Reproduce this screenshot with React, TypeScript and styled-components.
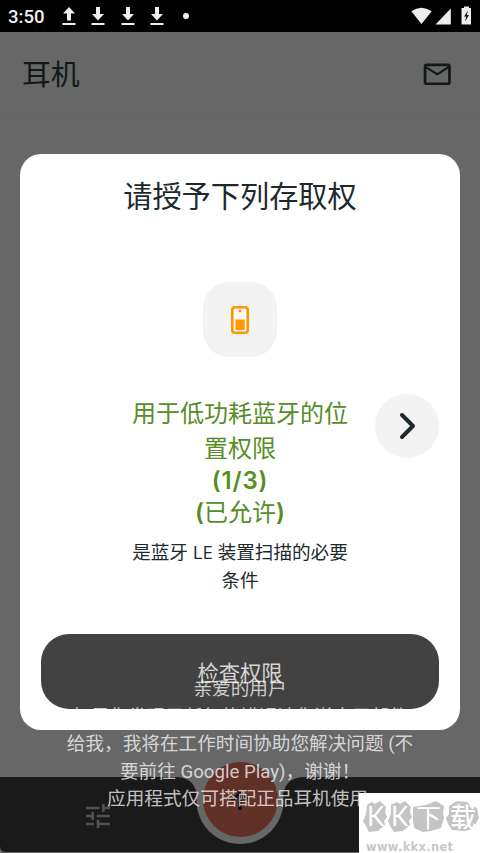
import React from "react";
import styled, { createGlobalStyle } from "styled-components";
import { MdOutlineEmail, MdTune } from "react-icons/md";

const GlobalStyle = createGlobalStyle`
  * { box-sizing: border-box; }
  body { margin: 0; background: #676767; }
`;

const Screen = styled.div`
  position: relative;
  width: 480px;
  height: 853px;
  overflow: hidden;
  display: flex;
  flex-direction: column;
  background: #676767;
  color: #111819;
  font-family: "Open Sans", "Noto Sans CJK SC", sans-serif;
`;

const StatusBar = styled.div`
  height: 32px;
  flex: none;
  display: flex;
  align-items: center;
  justify-content: space-between;
  padding: 0 8px;
  background: #000;
  color: #f0f0f0;
`;

const StatusGroup = styled.div`
  display: flex;
  align-items: center;
`;

const Clock = styled.span`
  width: 54px;
  font: 500 18.5px/32px Roboto, sans-serif;
  padding-top: 1px;
`;

const Transfer = styled.svg`
  width: 14px;
  height: 18px;
  margin-right: 15.3px;
`;

const Dot = styled.i`
  width: 6px;
  height: 6px;
  margin-left: 4px;
  border-radius: 50%;
  background: #eee;
`;

const Header = styled.header`
  height: 86px;
  flex: none;
  display: flex;
  align-items: center;
  justify-content: space-between;
  padding: 0 27px 0 22px;
  border-bottom: 1px solid #646464;
`;

const AppTitle = styled.h1`
  margin: 0 0 2px;
  font-size: 28.8px;
  font-weight: 400;
  line-height: 82px;
`;

const Page = styled.main`
  flex: 1;
`;

const NavBar = styled.nav`
  position: relative;
  height: 75px;
  flex: none;
  display: flex;
  align-items: flex-start;
  margin-bottom: 1px;
  padding: 23px 0 0 82px;
  color: #515151;
`;

const NavShape = styled.svg`
  position: absolute;
  inset: 0;
`;

const NavIcon = styled.span`
  position: relative;
  display: flex;
`;

const Fab = styled.div`
  position: absolute;
  left: 202.5px;
  top: -15px;
  width: 75px;
  height: 75px;
  display: grid;
  place-items: center;
  border-radius: 50%;
  background: #613128;
`;

const Dialog = styled.section`
  position: absolute;
  left: 20px;
  top: 154px;
  width: 440px;
  height: 576px;
  display: flex;
  flex-direction: column;
  align-items: center;
  padding: 20px 21px 21px;
  border-radius: 21px;
  background: #fff;
  color: #1d292d;
`;

const DialogTitle = styled.h2`
  margin: 0;
  font-size: 29.2px;
  font-weight: 400;
  line-height: 44px;
`;

const Tile = styled.div`
  width: 74px;
  height: 75px;
  margin-top: 64px;
  display: grid;
  place-items: center;
  border-radius: 26px;
  background: #f3f3f3;
`;

const PermissionRow = styled.div`
  width: 100%;
  flex: 1;
  display: grid;
  grid-template-columns: 64px 1fr 64px;
  padding-top: 37px;
`;

const Permission = styled.div`
  grid-column: 2;
  padding-top: 2px;
  text-align: center;
`;

const PermissionLine = styled.div<{ $height: number; $latin?: boolean }>`
  height: ${(p) => p.$height}px;
  line-height: ${(p) => p.$height}px;
  font-family: Inter, "Noto Sans CJK SC", sans-serif;
  font-size: 24px;
  font-weight: ${(p) => (p.$latin ? 600 : 400)};
  letter-spacing: ${(p) => (p.$latin ? "0.8px" : "normal")};
  color: #558e25;
  white-space: nowrap;
`;

const Paren = styled.span`
  font-weight: 600;
`;

const Detail = styled.p`
  margin: 7px -4px 0;
  font-size: 18.6px;
  line-height: 27.5px;
  white-space: pre-line;
`;

const NextButton = styled.button`
  grid-column: 3;
  width: 64px;
  height: 64px;
  display: grid;
  place-items: center;
  padding: 0;
  border: 0;
  border-radius: 50%;
  background: #f3f3f3;
`;

const CheckButton = styled.button`
  width: 398px;
  height: 75px;
  flex: none;
  padding: 0;
  border: 0;
  border-radius: 28px;
  background: #424242;
  color: #d5d5d5;
  font: 400 21.3px/75px "Noto Sans CJK SC", sans-serif;
`;

const Toast = styled.div`
  position: absolute;
  left: 60px;
  top: 676px;
  width: 360px;
  text-align: center;
  white-space: pre;
  color: rgba(255, 255, 255, 0.74);
  font: 400 18.65px/27.6px Roboto, "Noto Sans CJK SC", sans-serif;
`;

const Watermark = styled.svg`
  position: absolute;
  right: 0;
  bottom: 0;
`;

const ARROW = "M5 0h4v7h4L7 13.500 1 7h4z";

function TransferIcon({ up }: { up?: boolean }) {
  return (
    <Transfer viewBox="0 0 14 18" fill="#eee">
      <path d={ARROW} transform={up ? "translate(0 13.500) scale(1 -1)" : undefined} />
      <path d="M.5 16h13v2H.5z" />
    </Transfer>
  );
}

export default function App() {
  return (
    <>
      <GlobalStyle />
      <Screen>
        <StatusBar>
          <StatusGroup>
            <Clock>3:50</Clock>
            <TransferIcon up />
            <TransferIcon />
            <TransferIcon />
            <TransferIcon />
            <Dot />
          </StatusGroup>
          <svg width="62" height="20" viewBox="410 6 62 20" fill="#eee">
            <path d="M411.3 11.3Q421.3 4 431.7 11.3L421.5 24z" />
            <path d="M450.8 8.6V24.5h-15.3z" />
            <path d="M464 6.5h5V8h2v16.5h-9.500V8h2.500z" />
            <path d="M468 10.500l-4 6h2.200l-1.200 5 4-6.500h-2.200z" fill="#111" />
          </svg>
        </StatusBar>
        <Header>
          <AppTitle>耳机</AppTitle>
          <MdOutlineEmail size={32.5} />
        </Header>
        <Page />
        <NavBar>
          <NavShape width="480" height="75" viewBox="0 0 480 75">
            <path
              d="M0 0H174C188 0 194 5 197 17A43.500 43.500 0 1 0 283 17C286 5 292 0 306 0H480V69Q480 75 474 75H6Q0 75 0 69Z"
              fill="#1a1a1a"
            />
          </NavShape>
          <NavIcon>
            <MdTune size={32} />
          </NavIcon>
          <Fab>
            <svg width="26" height="26" viewBox="0 0 26 26" fill="none" stroke="#0b0b0b" strokeWidth="3">
              <path d="M4 13Q9 11 13 6Q17 11 22 13M13 6V23" />
            </svg>
          </Fab>
        </NavBar>

        <Dialog>
          <DialogTitle>请授予下列存取权</DialogTitle>
          <Tile>
            <svg width="18" height="28" viewBox="0 0 18 28">
              <rect x="1.300" y="1.300" width="15.400" height="25.400" rx="2.800" fill="#fafafa" stroke="#ff9800" strokeWidth="2.600" />
              <path d="M4.500 13.500h9.200V24H4.500z" fill="#ff9800" />
              <circle cx="9" cy="5" r="1.500" fill="#ff9800" />
            </svg>
          </Tile>
          <PermissionRow>
            <Permission>
              <PermissionLine $height={36}>用于低功耗蓝牙的位</PermissionLine>
              <PermissionLine $height={34}>置权限</PermissionLine>
              <PermissionLine $height={29} $latin>(1/3)</PermissionLine>
              <PermissionLine $height={36}>
                <Paren>(</Paren>已允许<Paren>)</Paren>
              </PermissionLine>
              <Detail>{"是蓝牙 LE 装置扫描的必要\n条件"}</Detail>
            </Permission>
            <NextButton aria-label="Next">
              <svg width="20" height="30" viewBox="0 0 20 30" fill="none" stroke="#1d292d" strokeWidth="4" strokeLinecap="round" strokeLinejoin="round">
                <path d="M5 4L16 15L5 26" />
              </svg>
            </NextButton>
          </PermissionRow>
          <CheckButton>检查权限</CheckButton>
        </Dialog>

        <Toast>
          {`亲爱的用户
如果您发现了任何的错误请您送电子邮件
给我，我将在工作时间协助您解决问题 (不
要前往 Google Play)，谢谢！
应用程式仅可搭配正品耳机使用.`}
        </Toast>

        <Watermark width="121" height="60" viewBox="0 0 121 60">
          <path d="M0 0h121v60H0z" fill="#fff" />
          <g fill="#c4c4c4">
            <path d="M8 12l5-3 3 2 5-3 6 6-1 5 2 5-3 4 1 4-7 6-9 1-3-6-3-5 3-7z" />
            <path d="M32 12l6-3 3 2 5-3 6 6-1 5 2 5-3 4 1 4-7 6-9 1-4-6-2-5 3-7z" />
            <path d="M54 14l13-2 10-4 8 5-1 8 1 4-3 10-10 3-8 1-9-4-1-9z" />
            <path d="M90 13l8-5 10 1 4 4 6 2 2 10-3 5-2 6-10 2-12-1-4-6-2-6 3-4z" />
          </g>
          <g fill="#fff" fontFamily="Lato, 'Noto Sans CJK SC', sans-serif">
            <text x="8" y="33" fontSize="26">K</text>
            <text x="32" y="33" fontSize="26">K</text>
            <text x="57" y="34" fontSize="25">下</text>
            <text x="91" y="34" fontSize="26" fontWeight="500">载</text>
          </g>
          <text x="7" y="58" textLength="87" fontFamily="'DejaVu Sans', sans-serif" fontWeight="700" fontSize="11.500" fill="#c8c8c8">
            www.kkx.net
          </text>
        </Watermark>
      </Screen>
    </>
  );
}
